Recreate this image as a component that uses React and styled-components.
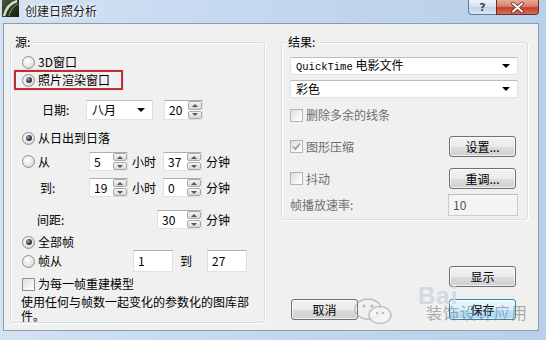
import React from 'react'
import styled, { createGlobalStyle } from 'styled-components'

const cjk = `font-family: 'Noto Sans CJK SC', 'Noto Sans', sans-serif;`
const grayText = '#6d6d6d'

const GlobalStyle = createGlobalStyle`
  html, body { margin: 0; padding: 0; background: #bcd2ec; }
  * { box-sizing: border-box; }
`

const Window = styled.div`
  ${cjk}
  position: relative;
  width: 546px;
  height: 340px;
  overflow: hidden;
  display: flex;
  flex-direction: column;
  padding: 0 7px 9px 3px;
  font-size: 12px;
  color: #000;
  background: linear-gradient(to right, #d3e2f3 0%, #c4d8ef 45%, #b9d0ea 100%);
`

const TitleBar = styled.div`
  height: 23px;
  display: flex;
  align-items: flex-start;
  flex-shrink: 0;
`

const AppIcon = styled.svg`
  width: 17px;
  height: 17px;
  margin-left: -1px;
  flex-shrink: 0;
`

const Title = styled.div`
  margin: 4px 0 0 6px;
  line-height: 14px;
  font-size: 12px;
  color: #1b1b1b;
  text-shadow: 0 0 6px #ffffff, 0 0 3px #ffffff;
`

const CaptionButtons = styled.div`
  margin-left: auto;
  display: flex;
`

const HelpButton = styled.div`
  width: 28px;
  height: 15px;
  border: 1px solid #6a7b93;
  border-top: none;
  border-right: none;
  border-radius: 0 0 0 4px;
  background: linear-gradient(to bottom, #eef3fa 0%, #d5e1ef 50%, #c3d3e7 51%, #d8e4f2 100%);
  display: flex;
  align-items: center;
  justify-content: center;
  font-family: 'DejaVu Sans', sans-serif;
  font-size: 11px;
  font-weight: bold;
  color: #3b4a5e;
  line-height: 1;
`

const CloseButton = styled.div`
  width: 43px;
  height: 15px;
  border: 1px solid #6b2f2a;
  border-top: none;
  border-radius: 0 0 4px 0;
  background: linear-gradient(to bottom, #e9a99b 0%, #d9806f 45%, #c2412e 55%, #d46e55 100%);
  display: flex;
  align-items: center;
  justify-content: center;
`

const Client = styled.div`
  flex: 1;
  display: flex;
  gap: 16px;
  padding: 18px 9px 0 6px;
  background: #f0f0f0;
  border: 1px solid #8c9db2;
`

const Group = styled.div`
  position: relative;
  width: ${p => p.$w}px;
  height: ${p => p.$h}px;
  flex-shrink: 0;
  border: 1px solid #d5dfe5;
  border-radius: 3px;
  box-shadow: inset 1px 1px 0 #ffffff, 1px 1px 0 #ffffff;
  padding: ${p => p.$pad};
  display: flex;
  flex-direction: column;
`

const Legend = styled.span`
  position: absolute;
  top: -8px;
  left: ${p => p.$left}px;
  padding: 0 2px;
  line-height: 14px;
  background: #f0f0f0;
`

const Row = styled.div`
  display: flex;
  align-items: center;
  height: ${p => p.$h}px;
  margin-top: ${p => p.$mt || 0}px;
  flex-shrink: 0;
`

const HighlightRow = styled.div`
  display: flex;
  align-items: center;
  width: 109px;
  height: 20px;
  margin-left: -8px;
  padding-left: 6px;
  border: 2px solid #bf2f33;
  box-shadow: 0 0 1px rgba(150, 30, 30, 0.5);
  flex-shrink: 0;
`

const Choice = styled.label`
  display: flex;
  align-items: center;
  width: ${p => (p.$w ? `${p.$w}px` : 'auto')};
  flex-shrink: 0;
  line-height: 14px;
  color: ${p => (p.$disabled ? grayText : '#000')};
`

const Radio = styled.span`
  width: 13px;
  height: 13px;
  margin-right: 3px;
  border-radius: 50%;
  border: 1px solid #8e8f8f;
  background: radial-gradient(circle at 40% 35%, #ffffff 0%, #e6e6e6 55%, #c9c9c9 100%);
  display: inline-flex;
  align-items: center;
  justify-content: center;
  flex-shrink: 0;

  &::after {
    content: '';
    display: ${p => (p.$checked ? 'block' : 'none')};
    width: 6px;
    height: 6px;
    border-radius: 50%;
    background: radial-gradient(circle at 35% 35%, #9fb0c2 0%, #3a4a5a 45%, #0f1820 100%);
  }
`

const Box = styled.span`
  width: 13px;
  height: 13px;
  margin-right: 3px;
  border: 1px solid ${p => (p.$disabled ? '#b4b4b4' : '#8e8f8f')};
  background: linear-gradient(135deg, #dcdcdc 0%, #f4f4f4 60%, #ffffff 100%);
  display: inline-flex;
  align-items: center;
  justify-content: center;
  flex-shrink: 0;
`

const Label = styled.span`
  width: ${p => (p.$w ? `${p.$w}px` : 'auto')};
  margin-left: ${p => p.$ml || 0}px;
  flex-shrink: 0;
  line-height: 14px;
  color: ${p => (p.$disabled ? grayText : '#000')};
`

const Field = styled.div`
  display: flex;
  width: ${p => p.$w}px;
  height: ${p => p.$h || 19}px;
  margin-left: ${p => p.$ml || 0}px;
  flex-shrink: 0;
  background: ${p => (p.$disabled ? '#f4f4f4' : '#ffffff')};
  border: 1px solid ${p => (p.$disabled ? '#c9cbcf' : '#dde2e8')};
  border-top-color: ${p => (p.$disabled ? '#b9bcc1' : '#abadb3')};
  color: ${p => (p.$disabled ? '#555' : '#000')};
`

const FieldText = styled.span`
  flex: 1;
  display: flex;
  align-items: center;
  padding-left: 4px;
  line-height: 1;
  font-size: 12px;
`

const Spinner = styled.div`
  width: 15px;
  display: flex;
  flex-direction: column;
  gap: 1px;
  padding: 0 0 0 1px;
`

const SpinButton = styled.div`
  flex: 1;
  display: flex;
  align-items: center;
  justify-content: center;
  border: 1px solid #a9a9a9;
  border-radius: 2px;
  background: linear-gradient(to bottom, #f6f6f6 0%, #e6e6e6 50%, #d8d8d8 100%);
`

const Arrow = styled.span`
  width: 0;
  height: 0;
  border-left: ${p => p.$size || 3}px solid transparent;
  border-right: ${p => p.$size || 3}px solid transparent;
  border-${p => (p.$up ? 'bottom' : 'top')}: ${p => (p.$size ? p.$size - 0 : 3)}px solid ${p => p.$color || '#555'};
`

const Select = styled.div`
  display: flex;
  align-items: center;
  width: ${p => (p.$w ? `${p.$w}px` : '100%')};
  height: ${p => p.$h}px;
  margin-top: ${p => p.$mt || 0}px;
  padding: 0 7px 0 5px;
  flex-shrink: 0;
  background: #ffffff;
  border: 1px solid #dde2e8;
  border-top-color: #b8bcc3;
`

const SelectText = styled.span`
  flex: 1;
  line-height: 14px;
  white-space: nowrap;
`

const Mono = styled.span`
  font-family: 'Liberation Mono', 'DejaVu Sans Mono', monospace;
  font-size: 10.5px;
`

const Para = styled.p`
  margin: 3px 0 0 -1px;
  width: 236px;
  line-height: 14px;
  font-size: 12px;
`

const RightColumn = styled.div`
  width: 247px;
  display: flex;
  flex-direction: column;
`

const Button = styled.div`
  width: 67px;
  height: 21px;
  margin-left: ${p => (p.$pushRight ? 'auto' : '0')};
  margin-right: ${p => (p.$pushRight ? '2px' : '0')};
  display: flex;
  align-items: center;
  justify-content: center;
  flex-shrink: 0;
  line-height: 14px;
  border: 1px solid ${p => (p.$default ? '#3c7fb1' : '#707070')};
  border-radius: 3px;
  box-shadow: inset 0 0 0 1px rgba(255, 255, 255, 0.7);
  background: ${p => (p.$default
    ? 'linear-gradient(to bottom, #eaf6fd 0%, #d9f0fc 50%, #bee6fd 51%, #a7d9f5 100%)'
    : 'linear-gradient(to bottom, #f2f2f2 0%, #ebebeb 50%, #dddddd 51%, #cfcfcf 100%)')};
`

const DisplayButton = styled(Button)`
  align-self: flex-end;
  margin: 46px 12px 0 0;
`

const BottomRow = styled.div`
  display: flex;
  justify-content: space-between;
  margin-top: 12px;
  padding: 0 12px 0 10px;
`

const Watermark = styled.div`
  position: absolute;
  left: 352px;
  top: 280px;
  width: 180px;
  height: 46px;
  pointer-events: none;
`

const WmLogo = styled.svg`
  position: absolute;
  left: 0;
  top: 16px;
  width: 44px;
  height: 30px;
`

const WmBaidu = styled.span`
  position: absolute;
  left: 66px;
  top: 2px;
  font-family: 'Liberation Sans', Arial, sans-serif;
  font-size: 24px;
  font-weight: bold;
  color: rgba(200, 210, 222, 0.75);
  letter-spacing: 1px;
`

const WmText = styled.span`
  position: absolute;
  left: 74px;
  top: 23px;
  ${cjk}
  font-size: 16px;
  line-height: 18px;
  letter-spacing: 1px;
  color: rgba(110, 110, 110, 0.55);
`

const SpinBox = ({ value, w, ml }) => (
  <Field $w={w} $ml={ml}>
    <FieldText>{value}</FieldText>
    <Spinner>
      <SpinButton><Arrow $up /></SpinButton>
      <SpinButton><Arrow /></SpinButton>
    </Spinner>
  </Field>
)

const RadioChoice = ({ checked, children, w }) => (
  <Choice $w={w}>
    <Radio $checked={checked} />
    {children}
  </Choice>
)

const CheckMark = ({ color }) => (
  <svg width='9' height='9' viewBox='0 0 9 9'>
    <path d='M1 4.5 L3.5 7 L8 1.5' fill='none' stroke={color} strokeWidth='1.6' />
  </svg>
)

const CheckChoice = ({ checked, disabled, children }) => (
  <Choice $disabled={disabled}>
    <Box $disabled={disabled}>{checked && <CheckMark color='#9a9a9a' />}</Box>
    {children}
  </Choice>
)

const App = () => (
  <Window>
    <GlobalStyle />
    <TitleBar>
      <AppIcon viewBox='0 0 17 17'>
        <defs>
          <linearGradient id='icbg' x1='0' y1='0' x2='1' y2='1'>
            <stop offset='0' stopColor='#4c5a3c' />
            <stop offset='1' stopColor='#151b10' />
          </linearGradient>
        </defs>
        <rect x='0' y='0' width='17' height='17' fill='url(#icbg)' />
        <path d='M2 16 C4 8 8 3 15 1' fill='none' stroke='#d8dfc8' strokeWidth='2.4' />
        <path d='M7 16 C8 11 11 6 16 4' fill='none' stroke='#8c9a74' strokeWidth='1' />
      </AppIcon>
      <Title>创建日照分析</Title>
      <CaptionButtons>
        <HelpButton>?</HelpButton>
        <CloseButton>
          <svg width='13' height='11' viewBox='0 0 13 11'>
            <path d='M2 1.5 L11 9.5 M11 1.5 L2 9.5' stroke='#5a1d16' strokeWidth='3.4' strokeLinecap='round' />
            <path d='M2 1.5 L11 9.5 M11 1.5 L2 9.5' stroke='#ffffff' strokeWidth='2' strokeLinecap='round' />
          </svg>
        </CloseButton>
      </CaptionButtons>
    </TitleBar>

    <Client>
      <Group $w={255} $h={281} $pad='11px 0 0 11px'>
        <Legend $left={2}>源:</Legend>
        <Row $h={16}>
          <RadioChoice>3D窗口</RadioChoice>
        </Row>
        <HighlightRow>
          <RadioChoice checked>照片渲染窗口</RadioChoice>
        </HighlightRow>
        <Row $h={20} $mt={10}>
          <Label $ml={20} $w={44}>日期:</Label>
          <Select $w={67} $h={20}>
            <SelectText>八月</SelectText>
            <Arrow $size={4} $color='#000' />
          </Select>
          <Field $w={39} $h={20} $ml={11}>
            <FieldText>20</FieldText>
            <Spinner>
              <SpinButton><Arrow $up /></SpinButton>
              <SpinButton><Arrow /></SpinButton>
            </Spinner>
          </Field>
        </Row>
        <Row $h={16} $mt={10}>
          <RadioChoice checked>从日出到日落</RadioChoice>
        </Row>
        <Row $h={19} $mt={6}>
          <RadioChoice w={67}>从</RadioChoice>
          <SpinBox value='5' w={39} />
          <Label $ml={4} $w={31}>小时</Label>
          <SpinBox value='37' w={39} />
          <Label $ml={4}>分钟</Label>
        </Row>
        <Row $h={19} $mt={7}>
          <Label $ml={18} $w={49}>到:</Label>
          <SpinBox value='19' w={39} />
          <Label $ml={4} $w={31}>小时</Label>
          <SpinBox value='0' w={39} />
          <Label $ml={4}>分钟</Label>
        </Row>
        <Row $h={19} $mt={13}>
          <Label $ml={15} $w={120}>间距:</Label>
          <SpinBox value='30' w={45} />
          <Label $ml={4}>分钟</Label>
        </Row>
        <Row $h={16} $mt={5}>
          <RadioChoice checked>全部帧</RadioChoice>
        </Row>
        <Row $h={22}>
          <RadioChoice w={111}>帧从</RadioChoice>
          <Field $w={40} $h={22}><FieldText>1</FieldText></Field>
          <Label $ml={7} $w={27}>到</Label>
          <Field $w={40} $h={22}><FieldText>27</FieldText></Field>
        </Row>
        <Row $h={16} $mt={4}>
          <CheckChoice>为每一帧重建模型</CheckChoice>
        </Row>
        <Para>使用任何与帧数一起变化的参数化的图库部件。</Para>
      </Group>

      <RightColumn>
        <Group $w={247} $h={178} $pad='14px 9px 0 8px'>
          <Legend $left={4}>结果:</Legend>
          <Select $h={18}>
            <SelectText><Mono>QuickTime</Mono> 电影文件</SelectText>
            <Arrow $size={4} $color='#000' />
          </Select>
          <Select $h={18} $mt={5}>
            <SelectText>彩色</SelectText>
            <Arrow $size={4} $color='#000' />
          </Select>
          <Row $h={16} $mt={9}>
            <CheckChoice disabled>删除多余的线条</CheckChoice>
          </Row>
          <Row $h={21} $mt={13}>
            <CheckChoice checked disabled>图形压缩</CheckChoice>
            <Button $pushRight>设置...</Button>
          </Row>
          <Row $h={21} $mt={11}>
            <CheckChoice disabled>抖动</CheckChoice>
            <Button $pushRight>重调...</Button>
          </Row>
          <Row $h={22} $mt={5}>
            <Label $disabled>帧播放速率:</Label>
            <Field $w={70} $h={22} $ml={'auto'} $disabled style={{ marginLeft: 'auto' }}>
              <FieldText>10</FieldText>
            </Field>
          </Row>
        </Group>
        <DisplayButton>显示</DisplayButton>
        <BottomRow>
          <Button>取消</Button>
          <Button $default>保存</Button>
        </BottomRow>
      </RightColumn>
    </Client>

    <Watermark>
      <WmLogo viewBox='0 0 44 30'>
        <ellipse cx='16' cy='13' rx='13' ry='10' fill='none' stroke='rgba(170,170,170,0.7)' strokeWidth='1.5' />
        <ellipse cx='28' cy='19' rx='11' ry='8.5' fill='rgba(245,245,245,0.8)' stroke='rgba(170,170,170,0.7)' strokeWidth='1.5' />
        <circle cx='12' cy='10' r='1.5' fill='rgba(160,160,160,0.7)' />
        <circle cx='20' cy='10' r='1.5' fill='rgba(160,160,160,0.7)' />
        <circle cx='25' cy='17' r='1.2' fill='rgba(160,160,160,0.7)' />
        <circle cx='31' cy='17' r='1.2' fill='rgba(160,160,160,0.7)' />
      </WmLogo>
      <WmBaidu>Bai</WmBaidu>
      <WmText>装饰设计应用</WmText>
    </Watermark>
  </Window>
)

export default App
